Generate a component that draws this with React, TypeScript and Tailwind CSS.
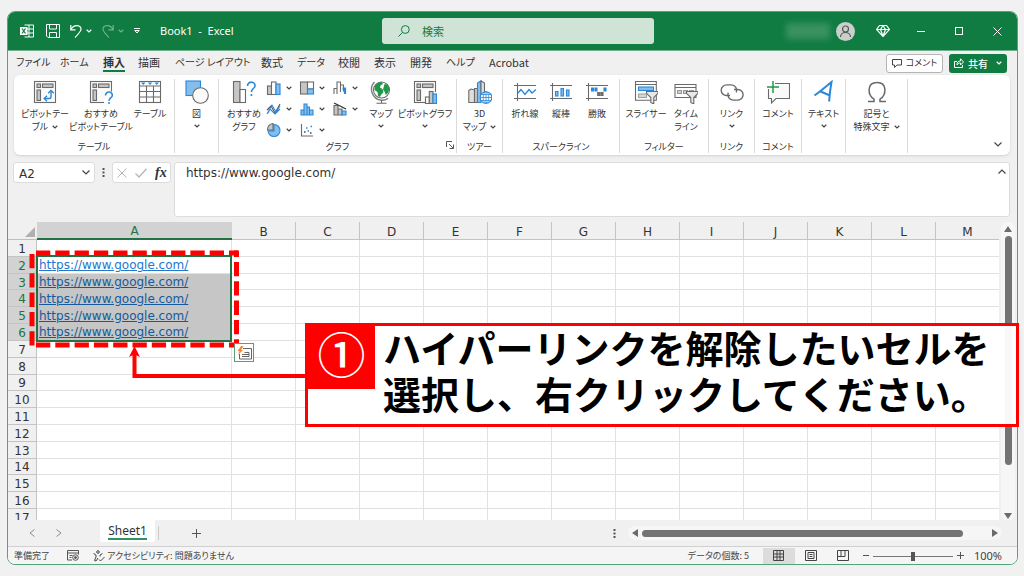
import type { ReactNode } from 'react';
import clsx from 'clsx';

const BLUE = '#2b88d8';
const GRAY = '#6a6a6a';

function Chevron({ className = 'text-[#444]' }: { className?: string }) {
  return (
    <svg viewBox="0 0 6 4" className={clsx('h-1 w-1.5 shrink-0', className)} fill="none" stroke="currentColor" strokeWidth="1.2">
      <path d="M.7.8 3 3 5.3.8" />
    </svg>
  );
}

function Icon({ children, small = false }: { children: ReactNode; small?: boolean }) {
  return (
    <svg
      viewBox={small ? '0 0 16 16' : '0 0 24 24'}
      className={small ? 'h-4 w-4 shrink-0' : 'h-6 w-6 shrink-0'}
      fill="none"
      stroke={GRAY}
      strokeWidth="1.1"
      aria-hidden="true"
    >
      {children}
    </svg>
  );
}

/* ---------- ribbon icons ---------- */

function PivotBase({ children }: { children?: ReactNode }) {
  return (
    <Icon>
      <rect x="1.5" y="1.5" width="21" height="21" fill="#fafafa" />
      <rect x="4" y="4" width="3.5" height="3.5" fill="#c8c6c4" />
      <rect x="9.5" y="4" width="10.5" height="3.5" fill="#c8c6c4" />
      <rect x="4" y="10" width="3.5" height="10.5" fill="#c8c6c4" />
      {children}
    </Icon>
  );
}

const PivotIcon = () => (
  <PivotBase>
    <g stroke={BLUE} strokeWidth="1.4">
      <path d="M11.5 18.5h5q1.5 0 1.5-1.5v-6" />
      <path d="m14 15.7-2.8 2.8 2.8 2.8M15.2 13.2l2.8-2.8 2.8 2.8" />
    </g>
  </PivotBase>
);

const RecommendedPivotIcon = () => (
  <PivotBase>
    <path d="M15 11.5h9V24h-9z" fill="#fff" stroke="none" />
    <path d="M16.5 15.5c0-5 7.3-4.3 6.8 0-.3 2.4-3.3 2.6-3.3 5.3" stroke={BLUE} strokeWidth="1.6" />
    <circle cx="20" cy="23" r="1" fill={BLUE} stroke="none" />
  </PivotBase>
);

const TableIcon = () => (
  <Icon>
    <rect x="1.5" y="1.5" width="21" height="21" fill="#fff" />
    <path d="M1.5 6h21M1.5 11.5h21M1.5 17h21M8.5 6v16.5M15.5 6v16.5" />
    <path d="M3 2.5h4.5L5.3 5zM9.8 2.5h4.5L12 5zM16.5 2.5H21L18.8 5z" fill={BLUE} stroke="none" />
  </Icon>
);

const ShapesIcon = () => (
  <Icon>
    <rect x="1" y="1" width="14.5" height="14.5" fill="#83beec" stroke={BLUE} />
    <circle cx="15.5" cy="15.5" r="7.8" fill="#fafafa" />
  </Icon>
);

const RecommendedChartIcon = () => (
  <Icon>
    <rect x="1.5" y="1.5" width="6.5" height="21" fill="#c8c6c4" />
    <rect x="8" y="9.5" width="5.5" height="13" fill="#fff" />
    <path d="M15.5 6c0-5.5 8-4.7 7.5 0-.3 2.5-3.6 2.7-3.6 6" stroke={BLUE} strokeWidth="1.6" />
    <circle cx="19.4" cy="15" r="1.1" fill={BLUE} stroke="none" />
  </Icon>
);

const GlobeIcon = () => (
  <Icon>
    <circle cx="12.5" cy="10" r="8" fill="#fff" />
    <path
      d="M6 6c1.5-2.5 4-4 6.5-4l1.5 2-2.5 1.5-.5 2 2.5 1.5 1 3-2.5 3-1 2-2-1-.5-4-3-2zM15.5 4l3 .5 1.8 4-1 4-2.5 2.5-1.3-3.5-1.5-2z"
      fill="#21974a"
      stroke="none"
    />
    <path d="M5.5 2C-.5 8 3 19 12.5 20.3c3 .2 5-.8 6.5-2" stroke="#7d7d7d" strokeWidth="1.4" />
    <path d="M12.5 20v3M7.5 23.3h10" />
  </Icon>
);

const PivotChartIcon = () => (
  <PivotBase>
    <path d="M12 12h12v12H12z" fill="#fff" stroke="none" />
    <rect x="12.5" y="17" width="3.8" height="6.5" fill="#fff" />
    <rect x="16.3" y="11.5" width="3.7" height="12" fill="#c8c6c4" />
    <rect x="20" y="14" width="3.5" height="9.5" fill="#83beec" stroke={BLUE} />
  </PivotBase>
);

const Map3dIcon = () => (
  <Icon>
    <path d="M.8 10.5 3 9l3.5 1v12.5H.8z" fill="#e1dfdd" />
    <path d="M6.5 8.5h3v14h-3z" fill="#c8c6c4" />
    <path d="M9.5 3 13 1v21.5H9.5z" fill="#83beec" stroke={BLUE} />
    <path d="m13 1 3.5 2v11H13z" fill="#e1dfdd" />
    <circle cx="18" cy="17.5" r="5.8" fill="#fff" stroke={BLUE} />
    <path d="M12.3 17.5h11.4M13.3 14.5h9.4M13.3 20.5h9.4M18 11.7v11.6" stroke={BLUE} strokeWidth=".8" />
    <ellipse cx="18" cy="17.5" rx="2.8" ry="5.8" stroke={BLUE} strokeWidth=".8" />
  </Icon>
);

const SparkLineIcon = () => (
  <Icon>
    <path d="M4.5 3v18M1 5.5h22M1 18.5h22" />
    <path d="m5 13 3-3.5 4 5 4-5 3 3.5 4-3.5" stroke={BLUE} strokeWidth="1.3" />
  </Icon>
);

const SparkColumnIcon = () => (
  <Icon>
    <path d="M3.5 3v18M1 5.5h22M1 18.5h22" />
    <g fill="#83beec" stroke={BLUE}>
      <rect x="6.5" y="11.5" width="2.5" height="4.5" />
      <rect x="12" y="8.5" width="2.5" height="7.5" />
      <rect x="17.5" y="10" width="2.5" height="6" />
    </g>
  </Icon>
);

const SparkWinIcon = () => (
  <Icon>
    <path d="M3.5 3v18M1 5.5h22M1 18.5h22" />
    <path d="M6.5 8h2v3h-2zM10 8h2v3h-2zM19 8h2v3h-2z" fill={BLUE} stroke={BLUE} />
    <path d="M12.7 12.5h2v3h-2zM16 12.5h2v3h-2z" fill="#777" />
  </Icon>
);

const Funnel = () => <path d="M12.5 11.5H24v1.8l-4.2 4.2V24l-3-1.5v-5l-4.3-4.2z" fill="#e8e8e8" />;

const SlicerIcon = () => (
  <Icon>
    <path d="M1.5 1.5h20.8v18.8H1.5zM1.5 4.5h20.8" fill="#fff" />
    <rect x="4.5" y="7" width="15" height="3.5" fill="#83beec" stroke={BLUE} />
    <rect x="4.5" y="14" width="8" height="3.5" fill="#d8d8d8" stroke="#a0a0a0" />
    <Funnel />
  </Icon>
);

const TimelineIcon = () => (
  <Icon>
    <path d="M1 4.5h21v13H1zM1 7.5h21" fill="#fff" />
    <path d="M3.5 10.5h4v3h-4zM9.5 10.5h4v3h-4zM15.5 10.5h4v3h-4z" fill="#d0d0d0" stroke="#999" />
    <Funnel />
  </Icon>
);

const LinkIcon = () => (
  <Icon>
    <g strokeWidth="1.4">
      <path d="M10 15.5H6.5a5.3 5.3 0 0 1 0-10.6h4.8a5.3 5.3 0 0 1 4.9 7.5" />
      <path d="M14 9.5h3.8a5.3 5.3 0 0 1 0 10.6h-4.6a5.3 5.3 0 0 1-4.9-7.5" />
    </g>
  </Icon>
);

const CommentIcon = () => (
  <Icon>
    <path d="M2.5 9v9.5h3V23l4.5-4.5h13.5v-15H9" fill="#fafafa" />
    <path d="M7 1v12M1 7h12" stroke="#21974a" strokeWidth="1.5" />
  </Icon>
);

const TextIcon = () => (
  <Icon>
    <path d="M2.5 15.5c5-3.5 11-8.5 17-13.5-1 6-2 13-2.3 19.5M8.5 11.5l9.5 4" stroke={BLUE} strokeWidth="2" />
  </Icon>
);

const OmegaIcon = () => (
  <Icon>
    <path d="M3 21.5h6v-2.3C2.5 15 1.5 2.5 12 2.5s9.5 12.5 3 16.7v2.3h6" strokeWidth="1.5" />
  </Icon>
);

const smallCharts: { label: string; icon: ReactNode }[] = [
  {
    label: '縦棒グラフ',
    icon: (
      <>
        <rect x="1.5" y="6" width="4" height="8.5" fill="#c8c6c4" />
        <rect x="5.5" y="2" width="4.5" height="12.5" fill="#fff" />
        <rect x="10" y="4" width="4" height="10.5" fill="#83beec" stroke={BLUE} />
      </>
    ),
  },
  {
    label: '階層構造グラフ',
    icon: (
      <>
        <rect x="1.5" y="2" width="7" height="12" fill="#c8c6c4" />
        <rect x="8.5" y="2" width="6" height="7" fill="#fff" />
        <rect x="8.5" y="9" width="6" height="5" fill="#83beec" stroke={BLUE} />
      </>
    ),
  },
  {
    label: 'ウォーターフォール',
    icon: (
      <>
        <path d="M2 14V8.5h3V14M5 8.5V2h3.5v10" />
        <path d="M8.5 5h3v6.5" />
        <path d="M10.5 8.5h2.5v5.5" stroke={BLUE} strokeWidth="2.2" />
      </>
    ),
  },
  {
    label: '折れ線グラフ',
    icon: (
      <>
        <path d="m1 9 4-4 4 7 5-9" stroke="#555" />
        <path d="m1 13 5-9 4 7 4-6M2 12l2-4 5 5 5-5" stroke={BLUE} />
      </>
    ),
  },
  {
    label: '統計グラフ',
    icon: <path d="M2 14V9h3V3h3v3h2.5v3H14v5zM5 9v5M8 6v8M10.5 8v6" fill="#83beec" stroke={BLUE} />,
  },
  {
    label: '複合グラフ',
    icon: (
      <>
        <path d="M2 14V4.5h4V14zM6 14V8h4v6z" fill="#c8c6c4" />
        <path d="M10 14v-4h4v4z" fill="#83beec" stroke={BLUE} />
        <path d="m2 2 12 6" stroke="#333" strokeWidth="1.3" />
      </>
    ),
  },
  {
    label: '円グラフ',
    icon: (
      <>
        <circle cx="8" cy="8.5" r="6" fill="#83beec" stroke={BLUE} />
        <path d="M7 1.5V8H1.5A6 6 0 0 1 7 1.5z" fill="#c8c6c4" />
        <path d="M8 3v6H3" stroke={BLUE} />
      </>
    ),
  },
  {
    label: '散布図',
    icon: (
      <>
        <path d="M2.5 2v12H14" />
        <path d="M5 10h1.5M11 11h1.5" stroke="#444" strokeWidth="1.5" />
        <path d="M7 6h1.5M11.5 4.5H13M8.5 9H10" stroke={BLUE} strokeWidth="1.5" />
      </>
    ),
  },
];

/* ---------- ribbon ---------- */

function RibbonButton({
  icon,
  lines,
  width,
  menu,
}: {
  icon: ReactNode;
  lines: string[];
  width: string;
  menu?: 'inline' | 'below';
}) {
  return (
    <button className={clsx('flex shrink-0 flex-col items-center', width)}>
      {icon}
      <span className="mt-[3px] block text-[9px] leading-[13px] whitespace-nowrap">
        {lines.map((line, i) => (
          <span key={line} className="flex items-center justify-center gap-1">
            {line}
            {menu === 'inline' && i === lines.length - 1 && <Chevron />}
          </span>
        ))}
      </span>
      {menu === 'below' && (
        <span className="flex h-3 items-center">
          <Chevron />
        </span>
      )}
    </button>
  );
}

function RibbonGroup({
  label,
  width,
  children,
  launcher,
}: {
  label?: string;
  width: string;
  children: ReactNode;
  launcher?: boolean;
}) {
  return (
    <section className={clsx('relative mt-1 mb-0.5 flex shrink-0 flex-col justify-between border-r border-[#dadada]', width)}>
      <div className="flex justify-center pt-px">{children}</div>
      {label && <h2 className="text-center text-[9px] leading-[13px]">{label}</h2>}
      {launcher && (
        <button aria-label="グラフのオプション" className="absolute right-0.5 bottom-1">
          <svg viewBox="0 0 8 8" className="h-2 w-2" fill="none" stroke="#555">
            <path d="M.5 6V.5H6M3 3l4 4M7.5 3.5v4h-4" />
          </svg>
        </button>
      )}
    </section>
  );
}

function Ribbon() {
  return (
    <div className="mr-[7px] ml-1.5 flex h-20 shrink-0 rounded-md bg-white shadow-sm">
      <RibbonGroup label="テーブル" width="w-[161px]">
        <RibbonButton icon={<PivotIcon />} lines={['ピボットテー', 'ブル']} width="w-[50px]" menu="inline" />
        <RibbonButton icon={<RecommendedPivotIcon />} lines={['おすすめ', 'ピボットテーブル']} width="w-[62px]" />
        <RibbonButton icon={<TableIcon />} lines={['テーブル']} width="w-9" />
      </RibbonGroup>
      <RibbonGroup width="w-11">
        <RibbonButton icon={<ShapesIcon />} lines={['図']} width="w-9" menu="below" />
      </RibbonGroup>
      <RibbonGroup label="グラフ" width="w-[238px]" launcher>
        <RibbonButton icon={<RecommendedChartIcon />} lines={['おすすめ', 'グラフ']} width="w-11" />
        <div className="grid grid-cols-3 content-start gap-y-[5px]">
          {smallCharts.map((chart) => (
            <button key={chart.label} aria-label={chart.label} className="flex h-4 w-[33px] items-center gap-1">
              <Icon small>{chart.icon}</Icon>
              <Chevron />
            </button>
          ))}
        </div>
        <RibbonButton icon={<GlobeIcon />} lines={['マップ']} width="w-8" menu="below" />
        <RibbonButton icon={<PivotChartIcon />} lines={['ピボットグラフ']} width="w-14" menu="below" />
      </RibbonGroup>
      <RibbonGroup label="ツアー" width="w-[46px]">
        <RibbonButton icon={<Map3dIcon />} lines={['3D', 'マップ']} width="w-10" menu="inline" />
      </RibbonGroup>
      <RibbonGroup label="スパークライン" width="w-[117px]">
        <RibbonButton icon={<SparkLineIcon />} lines={['折れ線']} width="w-9" />
        <RibbonButton icon={<SparkColumnIcon />} lines={['縦棒']} width="w-9" />
        <RibbonButton icon={<SparkWinIcon />} lines={['勝敗']} width="w-9" />
      </RibbonGroup>
      <RibbonGroup label="フィルター" width="w-[89px]">
        <RibbonButton icon={<SlicerIcon />} lines={['スライサー']} width="w-11" />
        <RibbonButton icon={<TimelineIcon />} lines={['タイム', 'ライン']} width="w-9" />
      </RibbonGroup>
      <RibbonGroup label="リンク" width="w-[46px]">
        <RibbonButton icon={<LinkIcon />} lines={['リンク']} width="w-9" menu="below" />
      </RibbonGroup>
      <RibbonGroup label="コメント" width="w-[47px]">
        <RibbonButton icon={<CommentIcon />} lines={['コメント']} width="w-9" />
      </RibbonGroup>
      <RibbonGroup width="w-11">
        <RibbonButton icon={<TextIcon />} lines={['テキスト']} width="w-9" menu="below" />
      </RibbonGroup>
      <RibbonGroup width="w-[62px]">
        <RibbonButton icon={<OmegaIcon />} lines={['記号と', '特殊文字']} width="w-14" menu="inline" />
      </RibbonGroup>
      <button aria-label="リボンを折りたたむ" className="mt-auto mr-2 mb-2 ml-auto">
        <svg viewBox="0 0 8 5" className="h-[5px] w-2" fill="none" stroke="#444" strokeWidth="1.2">
          <path d="m.5.5 3.5 3.5L7.5.5" />
        </svg>
      </button>
    </div>
  );
}

/* ---------- title bar and tabs ---------- */

function TitleBar() {
  return (
    <header className="flex h-[39px] shrink-0 items-center border-b border-[#6fb08c] bg-[#107c41] pr-px pl-3 text-white">
      <div className="flex flex-1 items-center">
        <svg viewBox="0 0 14 14" className="mr-3 h-3.5 w-3.5" fill="none" stroke="#fff">
          <path d="M4.5 1h9v12h-9M9 1v12M4 5h9.5M4 9h9.5" />
          <path d="M0 3h7.5v8H0z" fill="#fff" stroke="none" />
          <path d="m2 4.500 3.500 5M5.500 4.500 2 9.500" stroke="#107c41" strokeWidth="1.3" />
        </svg>
        <button aria-label="上書き保存" className="mr-2.5">
          <svg viewBox="0 0 14 14" className="h-3.5 w-3.5" fill="none" stroke="#fff">
            <path d="M.5.5h13v13H2L.5 12zM3.500.5V5h7V.5M3.500 13.500v-5h7v5" />
          </svg>
        </button>
        <button aria-label="元に戻す" className="mr-2.5 flex items-center gap-1">
          <svg viewBox="0 0 12 14" className="h-3.5 w-3" fill="none" stroke="#fff" strokeWidth="1.2">
            <path d="M.8 1v4.800h4.800M1 5.500C4-.5 11.500 1 11 5.500c-.2 2-2 3.500-6 8" />
          </svg>
          <Chevron className="text-white" />
        </button>
        <button aria-label="やり直し" className="mr-2.5 flex items-center gap-1 opacity-40" disabled>
          <svg viewBox="0 0 12 14" className="h-3.5 w-3" fill="none" stroke="#fff" strokeWidth="1.2">
            <path d="M11.200 1v4.800H6.400M11 5.500C8-.5.5 1 1 5.500c.2 2 2 3.500 6 8" />
          </svg>
          <Chevron className="text-white" />
        </button>
        <button aria-label="クイック アクセス ツール バー" className="mr-5">
          <svg viewBox="0 0 6 6" className="h-1.5 w-1.5" fill="none" stroke="#fff">
            <path d="M0 .5h6M.8 2.500 3 5l2.200-2.500z" />
          </svg>
        </button>
        <h1 className="font-['Noto_Sans','Noto_Sans_CJK_JP',sans-serif] text-[11px] whitespace-pre">Book1  -  Excel</h1>
      </div>
      <label className="flex h-[26px] w-[272px] items-center gap-3 rounded-[3px] bg-[#cfe3d7] pl-4 text-[#107c41]">
        <svg viewBox="0 0 12 12" className="h-3 w-3 shrink-0" fill="none" stroke="currentColor" aria-label="検索">
          <circle cx="7.3" cy="4.5" r="3.9" />
          <path d="M4.5 7.5.5 11.5" />
        </svg>
        <input placeholder="検索" className="min-w-0 flex-1 text-[11px] outline-none placeholder:text-[#107c41]" />
      </label>
      <div className="flex flex-1 items-center justify-end">
        <div className="mr-1.5 h-4 w-11 bg-[#4c9b6e] opacity-70 blur-[3px]" />
        <button aria-label="アカウント" className="mr-[9px] rounded-full bg-[#c9cfcb]">
          <svg viewBox="0 0 19 19" className="h-[19px] w-[19px]" fill="none" stroke="#555" strokeWidth="1.2">
            <circle cx="9.5" cy="7" r="3" />
            <path d="M4.5 15c0-6 10-6 10 0" />
          </svg>
        </button>
        <button aria-label="Premium" className="flex w-[38px] justify-center">
          <svg viewBox="0 0 14 12" className="h-3 w-3.5" fill="none" stroke="#fff" strokeWidth="1.2">
            <path d="M3.5.5h7l3 4L7 11.5.5 4.5zM.5 4.5h13M4.5 4.5 7 11l2.5-6.5L7 .5z" />
          </svg>
        </button>
        <button aria-label="最小化" className="flex w-[38px] justify-center">
          <span className="h-px w-2 bg-white" />
        </button>
        <button aria-label="最大化" className="flex w-[38px] justify-center">
          <span className="h-2 w-2 border border-white" />
        </button>
        <button aria-label="閉じる" className="flex w-[38px] justify-center">
          <svg viewBox="0 0 9 9" className="h-[9px] w-[9px]" stroke="#fff">
            <path d="m.5.5 8 8M8.5.5l-8 8" />
          </svg>
        </button>
      </div>
    </header>
  );
}

// katakana names are set a size smaller than the kanji ones
const tabs = [
  { name: 'ファイル', className: 'w-11 text-[10px]' },
  { name: 'ホーム', className: 'w-[43px] text-[10px]' },
  { name: '挿入', className: 'w-[35px] text-[11px]' },
  { name: '描画', className: 'w-[37px] text-[11px]' },
  { name: 'ページ レイアウト', className: 'w-[86px] text-[10px]' },
  { name: '数式', className: 'w-9 text-[11px]' },
  { name: 'データ', className: 'w-[41px] text-[10px]' },
  { name: '校閲', className: 'w-9 text-[11px]' },
  { name: '表示', className: 'w-9 text-[11px]' },
  { name: '開発', className: 'w-9 text-[11px]' },
  { name: 'ヘルプ', className: 'w-[43px] text-[10px]' },
  { name: 'Acrobat', className: 'w-12 text-[11px]' },
];

function TabRow() {
  return (
    <div className="flex h-6 shrink-0 items-center pr-2.5 pl-2">
      <nav className="flex leading-4">
        {tabs.map((tab) => (
          <div key={tab.name} className={clsx('shrink-0 whitespace-nowrap', tab.className)}>
            <button className={clsx('border-b-2', tab.name === '挿入' ? 'border-[#107c41] font-bold' : 'border-transparent')}>
              {tab.name}
            </button>
          </div>
        ))}
      </nav>
      <button className="ml-auto flex h-[19px] w-[57px] items-center justify-center gap-1 rounded-[3px] border border-[#b5b5b5] bg-white text-[9px] whitespace-nowrap">
        <svg viewBox="0 0 10 9" className="h-[9px] w-2.5 shrink-0" fill="none" stroke="#444">
          <path d="M.5.5h9V6H5L2.5 8.500V6h-2z" />
        </svg>
        コメント
      </button>
      <button className="ml-1.5 flex h-[19px] w-[58px] items-center justify-center gap-1 rounded-[3px] bg-[#107c41] text-[10px] font-medium text-white">
        <svg viewBox="0 0 10 10" className="h-2.5 w-2.5 shrink-0" fill="none" stroke="#fff">
          <path d="M3 3.500H.5v6h8V7M3 7c0-3 1.500-4 3.500-4V.800L9.500 4l-3 3V5C5 5 4 5.500 3 7z" />
        </svg>
        共有
        <Chevron className="ml-1 text-white" />
      </button>
    </div>
  );
}

function FormulaBar() {
  return (
    <div className="mr-[7px] ml-[5px] flex h-[67px] shrink-0 items-start pt-[7px] text-[#333]">
      <div className="flex h-[21px] w-[82px] items-center rounded-[3px] border border-[#dcdcdc] bg-white px-1">
        <input
          aria-label="名前ボックス"
          defaultValue="A2"
          className="w-full min-w-0 pt-0.5 pl-px font-['DejaVu_Sans',sans-serif] text-[12px] leading-4 outline-none"
        />
        <svg viewBox="0 0 8 5" className="h-[5px] w-2 shrink-0" fill="none" stroke="#444" strokeWidth="1.2">
          <path d="m.5.5 3.5 3.5L7.5.5" />
        </svg>
      </div>
      <svg viewBox="0 0 3 9" className="mx-[7px] mt-1.5 h-[9px] w-[3px]" fill="#555">
        <path d="M.5 0h2v2h-2zM.5 3.5h2v2h-2zM.5 7h2v2h-2z" />
      </svg>
      <div className="flex h-[21px] w-[59px] items-center gap-2 rounded-[3px] border border-[#dcdcdc] bg-white pl-1">
        <button aria-label="キャンセル">
          <svg viewBox="0 0 10 10" className="h-2.5 w-2.5" stroke="#b5b5b5">
            <path d="m.5.5 9 9M9.5.5l-9 9" />
          </svg>
        </button>
        <button aria-label="入力">
          <svg viewBox="0 0 12 10" className="h-2.5 w-3" fill="none" stroke="#b5b5b5" strokeWidth="1.3">
            <path d="M.5 5.5 4 9 11.500.8" />
          </svg>
        </button>
        <button className="font-['Liberation_Serif',serif] text-[14px] leading-none font-bold italic">fx</button>
      </div>
      <div className="ml-[3px] flex h-[55px] min-w-0 flex-1 rounded-[3px] border border-[#dcdcdc] bg-white">
        <textarea
          aria-label="数式バー"
          defaultValue="https://www.google.com/"
          className="flex-1 resize-none overflow-hidden px-[11px] py-px font-['DejaVu_Sans',sans-serif] text-[12px] leading-[18px] outline-none"
        />
        <button aria-label="数式バーの折りたたみ" className="mt-1.5 mr-[3px] self-start">
          <svg viewBox="0 0 8 5" className="h-[5px] w-2" fill="none" stroke="#444" strokeWidth="1.2">
            <path d="M.5 4.5 4 1l3.5 3.5" />
          </svg>
        </button>
      </div>
    </div>
  );
}

/* ---------- sheet ---------- */

const columns = ['A', 'B', 'C', 'D', 'E', 'F', 'G', 'H', 'I', 'J', 'K', 'L', 'M'];
const rows = Array.from({ length: 17 }, (_, i) => i + 1);

const tableClass =
  "w-[992px] table-fixed border-separate border-spacing-0 font-['DejaVu_Sans',sans-serif] text-[12px] leading-none text-[#333]";

function Columns() {
  return (
    <colgroup>
      <col className="w-[29px]" />
      <col className="w-[195px]" />
      {columns.slice(1).map((c) => (
        <col key={c} />
      ))}
    </colgroup>
  );
}

function Sheet() {
  return (
    <div className="flex min-h-0 flex-1">
      <div className="min-w-0 flex-1 overflow-hidden">
        <table className={tableClass}>
          <Columns />
          <thead>
            <tr className="h-[18px]">
              <th className="border-b border-[#bdbdbd] p-0 pr-0.5 align-bottom" aria-label="すべて選択">
                <svg viewBox="0 0 10 10" className="mb-0.5 ml-auto h-2.5 w-2.5" fill="#b0b0b0">
                  <path d="M10 0v10H0z" />
                </svg>
              </th>
              {columns.map((c) => (
                <th
                  key={c}
                  className={clsx(
                    'p-0 pt-0.5 font-normal',
                    c === 'A' ? 'border-b-2 border-[#217346] bg-[#d2d2d2] text-[#217346]' : 'border-r border-b border-[#c4c4c4]',
                  )}
                >
                  {c}
                </th>
              ))}
            </tr>
          </thead>
        </table>
        <table className={clsx('h-[286px]', tableClass)}>
          <Columns />
          <tbody>
            {rows.map((r) => {
              const selected = r >= 2 && r <= 6;
              return (
                <tr key={r}>
                  <th
                    className={clsx(
                      'border-r border-b border-[#c4c4c4] p-0 pt-0.5 font-normal',
                      selected ? 'bg-[#d2d2d2] text-[#217346]' : 'bg-[#f0f0f0]',
                    )}
                  >
                    {r}
                  </th>
                  {columns.map((c) => (
                    <td
                      key={c}
                      className={clsx(
                        'border-r border-b p-0 pt-px pl-0.5',
                        selected && c === 'A' && r > 2 ? 'border-[#c6c6c6] bg-[#c6c6c6]' : 'border-[#e1e1e1] bg-white',
                      )}
                    >
                      {selected && c === 'A' && (
                        <a
                          href="https://www.google.com/"
                          className={clsx('underline underline-offset-1', r === 2 ? 'text-[#2478cc]' : 'text-[#155a9c]')}
                        >
                          https://www.google.com/
                        </a>
                      )}
                    </td>
                  ))}
                </tr>
              );
            })}
          </tbody>
        </table>
      </div>
      <div className="mx-0.5 flex w-3.5 shrink-0 flex-col items-center rounded-full bg-[#f6f6f6] pt-1 pb-px">
        <svg viewBox="0 0 8 6" className="h-1.5 w-2" fill="#6b6b6b">
          <path d="m4 0 4 6H0z" />
        </svg>
        <div className="mt-1 h-[229px] w-[7px] rounded-full bg-[#737373]" />
        <svg viewBox="0 0 8 6" className="mt-auto h-1.5 w-2" fill="#6b6b6b">
          <path d="m4 6 4-6H0z" />
        </svg>
      </div>
    </div>
  );
}

function SheetTabs() {
  return (
    <div className="flex h-[26px] shrink-0 items-center">
      <button aria-label="前のシート" className="ml-[21px]">
        <svg viewBox="0 0 6 8" className="h-2 w-1.5" fill="none" stroke="#8a8a8a">
          <path d="M5.5.5 1 4l4.5 3.5" />
        </svg>
      </button>
      <button aria-label="次のシート" className="ml-[21px]">
        <svg viewBox="0 0 6 8" className="h-2 w-1.5" fill="none" stroke="#8a8a8a">
          <path d="M.5.5 5 4 .5 7.500" />
        </svg>
      </button>
      <div className="ml-[38px] flex h-[22px] w-[55px] justify-center self-start rounded-b-[3px] bg-white">
        <button className="h-5 border-b-2 border-[#2f9461] pt-1 font-['Noto_Sans',sans-serif] text-[12px] leading-[14px] text-[#333]">
          Sheet1
        </button>
      </div>
      <span className="ml-[3px] h-3.5 w-px bg-[#ccc]" />
      <button aria-label="新しいシート" className="ml-[33px]">
        <svg viewBox="0 0 9 9" className="h-[9px] w-[9px]" stroke="#555">
          <path d="M4.5 0v9M0 4.5h9" />
        </svg>
      </button>
      <svg viewBox="0 0 3 9" className="ml-auto h-[9px] w-[3px]" fill="#555">
        <path d="M.5 0h2v2h-2zM.5 3.5h2v2h-2zM.5 7h2v2h-2z" />
      </svg>
      <div className="mr-[15px] ml-3 flex h-3.5 w-[374px] items-center rounded-full bg-[#f6f6f6] px-1">
        <svg viewBox="0 0 6 8" className="h-2 w-1.5" fill="#6b6b6b">
          <path d="M6 0v8L0 4z" />
        </svg>
        <div className="ml-1 h-[7px] w-[321px] rounded-full bg-[#737373]" />
        <svg viewBox="0 0 6 8" className="ml-auto h-2 w-1.5" fill="#6b6b6b">
          <path d="M0 0v8l6-4z" />
        </svg>
      </div>
    </div>
  );
}

function StatusBar() {
  return (
    <footer className="flex h-[18px] shrink-0 items-center border-t border-[#d0d0d0] bg-[#f5f5f5] pl-1.5 text-[9px] leading-none whitespace-nowrap text-[#444]">
      <span className="w-[53px]">準備完了</span>
      <svg viewBox="0 0 12 11" className="h-[11px] w-3" fill="none" stroke="#555">
        <path d="M5 10H.5V.5h11v4M.5 3h11M2.5 5.5h3M2.5 7.5h2" />
        <circle cx="8.5" cy="7.5" r="2.8" />
        <circle cx="8.5" cy="7.5" r="1" fill="#555" />
      </svg>
      <svg viewBox="0 0 12 12" className="mr-0.5 ml-3.5 h-3 w-3" fill="none" stroke="#444">
        <circle cx="5" cy="2" r="1.3" />
        <path d="M.8 3.200Q.8 4.500 3 5v2L1.500 10.500l1.500.5L5 8M9.200 3.200Q9.200 4.500 7 5v1.500M6 9.500l1.500 1.500L11.500 7" />
      </svg>
      <span>アクセシビリティ: 問題ありません</span>
      <span className="ml-auto">データの個数: 5</span>
      <button aria-label="標準" className="ml-3.5 flex h-4 w-8 items-center justify-center bg-[#dcdcdc]">
        <svg viewBox="0 0 11 11" className="h-[11px] w-[11px]" fill="none" stroke="#444">
          <path d="M.5.5h10v10H.5zM.5 4h10M.5 7h10M4 .5v10M7 .5v10" />
        </svg>
      </button>
      <button aria-label="ページ レイアウト" className="flex w-8 justify-center">
        <svg viewBox="0 0 12 11" className="h-[11px] w-3" fill="none" stroke="#444">
          <path d="M.5.5h11v10H.5zM3 2.5h6v6H3zM4.5 4.5h3M4.5 6.5h3" />
        </svg>
      </button>
      <button aria-label="改ページ プレビュー" className="flex w-8 justify-center">
        <svg viewBox="0 0 12 11" className="h-[11px] w-3" fill="none" stroke="#444">
          <path d="M.5.5h11v10H.5zM.5 6.500H8V.5M4 .5v6" />
        </svg>
      </button>
      <button aria-label="縮小" className="ml-1 h-px w-1.5 bg-[#555]" />
      <div className="relative ml-1 h-3 w-20">
        <div className="mt-[6px] h-px bg-[#777]" />
        <input aria-label="ズーム" type="range" className="absolute inset-0 w-full opacity-0" />
        <div className="absolute top-0.5 left-[38px] h-[9px] w-1 bg-[#555]" />
      </div>
      <button aria-label="拡大" className="ml-1">
        <svg viewBox="0 0 7 7" className="h-[7px] w-[7px]" stroke="#555">
          <path d="M3.5 0v7M0 3.5h7" />
        </svg>
      </button>
      <span className="mr-[15px] ml-2.5 font-['Noto_Sans',sans-serif] text-[11px]">100%</span>
    </footer>
  );
}

/* ---------- tutorial marks drawn over the window ---------- */

function Annotations() {
  return (
    <>
      <div className="absolute top-[255px] left-9 h-[87px] w-[196px] border-2 border-[#217346]" />
      <svg className="absolute top-[245px] left-[25px] h-[140px] w-[285px]" viewBox="25 245 285 140" fill="none" stroke="#f00">
        <path d="M36 253h202M36 345h202" strokeWidth="5" strokeDasharray="14.3 5" />
        <path d="M32 254v92" strokeWidth="5" strokeDasharray="14.3 5" />
        <path d="M236.5 250.5v97" strokeWidth="5" strokeDasharray="14.3 5" strokeDashoffset="7.8" />
        <path d="M134.5 352v24H306" strokeWidth="4" />
        <path d="M134.5 346l5.5 11-5.5-2.5-5.5 2.5z" fill="#f00" stroke="none" />
      </svg>
      <button
        aria-label="クイック分析"
        className="absolute top-[343px] left-[234px] flex h-[19px] w-5 items-center justify-center border border-[#5c9c79] bg-white"
      >
        <svg viewBox="0 0 15 14" className="h-3.5 w-[15px]" fill="none" stroke="#666">
          <path d="M6 2.5h8.5V13h-12V8M5 10.5h7v-4H7.5M5 8.5h7" />
          <path d="M4 0 .5 5h2L1 9l5-5H4l2.500-4z" fill="#f0892b" stroke="none" />
        </svg>
      </button>
      <aside className="absolute top-[323px] right-[5px] left-[305px] flex h-[104px] border-[3px] border-[#f00] bg-white/95">
        <span className="flex h-[63px] w-[67px] shrink-0 items-center justify-center bg-[#f00] pb-3 text-[48px] leading-none font-medium text-white">
          ①
        </span>
        <p className="mt-px ml-2 font-['Liberation_Sans','Noto_Sans_CJK_JP',sans-serif] text-[38px] leading-[46px] font-bold whitespace-nowrap text-black [font-feature-settings:normal]">
          ハイパーリンクを解除したいセルを
          <br />
          選択し、右クリックしてください。
        </p>
      </aside>
    </>
  );
}

export default function App() {
  return (
    <div className="relative flex h-screen flex-col overflow-hidden bg-[#f1f1f1] pt-[11px] pr-[6px] pb-[11px] pl-[7px] font-['Noto_Sans_CJK_JP','Noto_Sans',sans-serif] text-[#333] [font-feature-settings:'palt']">
      <div className="flex min-h-0 flex-1 flex-col overflow-hidden rounded-lg border border-[#52a578] bg-[#f0f0f0]">
        <TitleBar />
        <TabRow />
        <Ribbon />
        <FormulaBar />
        <Sheet />
        <SheetTabs />
        <StatusBar />
      </div>
      <Annotations />
    </div>
  );
}
